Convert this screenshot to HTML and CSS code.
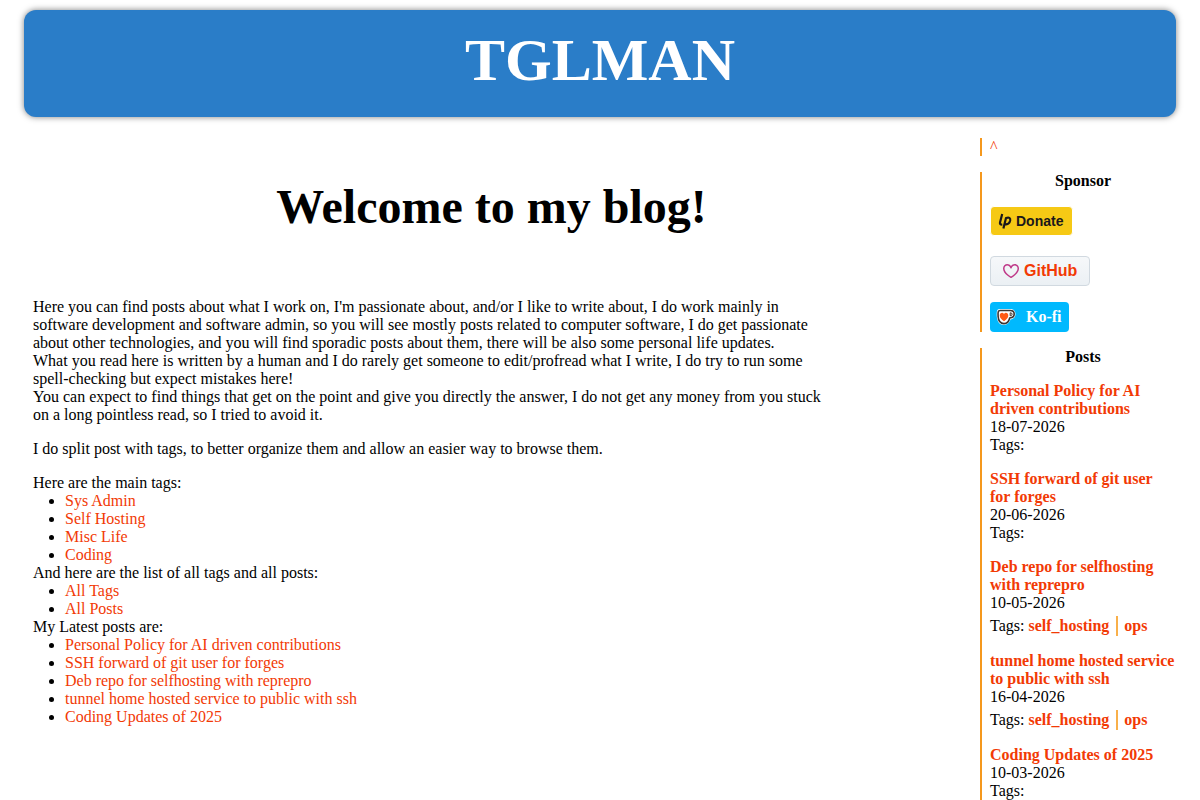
FILE: index.html
```html
<!DOCTYPE html>
<html lang="en">
<head>
    <meta charset="UTF-8">
    <meta name="viewport" content="width=device-width, initial-scale=1.0">
    <title>TGLMAN</title>
    <link rel="stylesheet" href="styles.css">
</head>
<body>
    <header class="site-header" id="top">
        <div class="site-title">TGLMAN</div>
    </header>

    <div class="layout">
        <main class="content">
            <h1>Welcome to my blog!</h1>
            <div class="intro">
                <p>
                    Here you can find posts about what I work on, I'm passionate about, and/or I like to write about, I do work mainly in
                    software development and software admin, so you will see mostly posts related to computer software, I do get passionate
                    about other technologies, and you will find sporadic posts about them, there will be also some personal life updates.<br>
                    What you read here is written by a human and I do rarely get someone to edit/profread what I write, I do try to run some
                    spell-checking but expect mistakes here!<br>
                    You can expect to find things that get on the point and give you directly the answer, I do not get any money from you stuck
                    on a long pointless read, so I tried to avoid it.
                </p>
                <p>I do split post with tags, to better organize them and allow an easier way to browse them.</p>
                <div>Here are the main tags:</div>
                <ul>
                    <li><a href="#">Sys Admin</a></li>
                    <li><a href="#">Self Hosting</a></li>
                    <li><a href="#">Misc Life</a></li>
                    <li><a href="#">Coding</a></li>
                </ul>
                <div>And here are the list of all tags and all posts:</div>
                <ul>
                    <li><a href="#">All Tags</a></li>
                    <li><a href="#">All Posts</a></li>
                </ul>
                <div>My Latest posts are:</div>
                <ul>
                    <li><a href="#">Personal Policy for AI driven contributions</a></li>
                    <li><a href="#">SSH forward of git user for forges</a></li>
                    <li><a href="#">Deb repo for selfhosting with reprepro</a></li>
                    <li><a href="#">tunnel home hosted service to public with ssh</a></li>
                    <li><a href="#">Coding Updates of 2025</a></li>
                </ul>
            </div>
        </main>

        <aside class="sidebar">
            <nav class="block"><a href="#top">^</a></nav>

            <section class="block sponsor">
                <h2>Sponsor</h2>
                <a class="button donate" href="#">
                    <svg width="14" height="16" viewBox="0 0 14 16" fill="none" stroke="#1a171b" stroke-width="2.200" stroke-linejoin="round" aria-hidden="true">
                        <path d="M4.200 1L2 9.500Q1.500 11.800 4.300 11.600"/>
                        <path d="M5.400 15.500L8 5Q12.800 3.600 12.200 7.400Q11.300 12 6.700 11.200"/>
                    </svg>
                    Donate
                </a>
                <a class="button github" href="#">
                    <svg width="16" height="16" viewBox="0 0 16 16" fill="#bf3989" aria-hidden="true">
                        <path d="m8 14.250.345.666a.75.75 0 0 1-.69 0l-.008-.004-.018-.01a7.152 7.152 0 0 1-.31-.17 22.055 22.055 0 0 1-3.434-2.414C2.045 10.731 0 8.350 0 5.500 0 2.836 2.086 1 4.250 1 5.797 1 7.153 1.802 8 3.020 8.847 1.802 10.203 1 11.750 1 13.914 1 16 2.836 16 5.500c0 2.850-2.045 5.231-3.885 6.818a22.066 22.066 0 0 1-3.744 2.584l-.018.01-.006.003h-.002ZM4.250 2.500c-1.336 0-2.750 1.164-2.750 3 0 2.150 1.580 4.144 3.365 5.682A20.580 20.580 0 0 0 8 13.393a20.580 20.580 0 0 0 3.135-2.211C12.920 9.644 14.500 7.650 14.500 5.500c0-1.836-1.414-3-2.750-3-1.373 0-2.609.986-3.029 2.456a.749.749 0 0 1-1.442 0C6.859 3.486 5.623 2.500 4.250 2.500Z"/>
                    </svg>
                    GitHub
                </a>
                <a class="button kofi" href="#">
                    <svg width="20" height="18" viewBox="0 0 20 18" aria-hidden="true">
                        <path d="M3.500 1h11c3 0 5 2.200 5 5 0 3-2 5.200-4.800 5.300C13.300 15 11 17 8 17 3.600 17 1.200 13.500.8 8.500.6 4.500.6 1 3.500 1z" fill="#fff"/>
                        <path d="M4 2.500h10.200c2.600 0 4 1.500 4 3.600 0 2.300-1.500 3.800-4.500 3.900C12.800 13.800 10.800 15.600 8 15.600c-3.600 0-5.600-2.800-5.900-7.200C1.900 4.300 2 2.500 4 2.500z" fill="#fff" stroke="#3b3634" stroke-width="1.600"/>
                        <path d="M14.200 4.800v3q1.900-.1 1.900-1.600t-1.900-1.400z" fill="#fff" stroke="#3b3634" stroke-width="1"/>
                        <path d="M8 13.300C5 11 3.700 9.400 3.700 7.400c0-2.800 3.100-3.500 4.300-1.500 1.200-2 4.300-1.300 4.300 1.500 0 2-1.300 3.600-4.300 5.900z" fill="#ff5a16"/>
                    </svg>
                    Ko-fi
                </a>
            </section>

            <section class="block">
                <h2>Posts</h2>
                <article class="post">
                    <a href="#">Personal Policy for AI driven contributions</a>
                    <time datetime="2026-07-18">18-07-2026</time>
                    <div>Tags:</div>
                </article>
                <article class="post">
                    <a href="#">SSH forward of git user for forges</a>
                    <time datetime="2026-06-20">20-06-2026</time>
                    <div>Tags:</div>
                </article>
                <article class="post">
                    <a href="#">Deb repo for selfhosting with reprepro</a>
                    <time datetime="2026-05-10">10-05-2026</time>
                    <div class="tags">Tags:
                        <ul>
                            <li><a href="#">self_hosting</a></li>
                            <li><a href="#">ops</a></li>
                        </ul>
                    </div>
                </article>
                <article class="post">
                    <a href="#">tunnel home hosted service to public with ssh</a>
                    <time datetime="2026-04-16">16-04-2026</time>
                    <div class="tags">Tags:
                        <ul>
                            <li><a href="#">self_hosting</a></li>
                            <li><a href="#">ops</a></li>
                        </ul>
                    </div>
                </article>
                <article class="post">
                    <a href="#">Coding Updates of 2025</a>
                    <time datetime="2026-03-10">10-03-2026</time>
                    <div>Tags:</div>
                </article>
            </section>
        </aside>
    </div>
</body>
</html>
```

FILE: styles.css
```css
* {
    box-sizing: border-box;
}

body {
    margin: 0;
    padding: 10px 24px 0;
    font-family: "Liberation Serif", "Times New Roman", serif;
    font-size: 16px;
    line-height: 18px;
    color: #000;
    background: #fff;
}

a {
    color: #f23a05;
    text-decoration: none;
}

a:hover {
    text-decoration: underline;
}

.site-header {
    padding: 16px 16px 22px;
    border-radius: 12px;
    background: #2a7dc8;
    box-shadow: 0 0 6px rgba(0, 0, 0, 0.5);
    text-align: center;
}

.site-title {
    font-size: 60px;
    line-height: 69px;
    font-weight: bold;
    color: #fff;
}

.layout {
    display: grid;
    grid-template-columns: 1fr 196px;
    gap: 30px;
    margin-top: 21px;
}

.content {
    padding: 41px 0 0 9px;
}

.content h1 {
    margin: 0 0 64px;
    font-size: 48px;
    line-height: 55px;
    text-align: center;
}

.intro {
    max-width: 800px;
}

.intro p {
    margin: 0 0 16px;
}

.intro ul {
    margin: 0;
    padding-left: 32px;
}

.block {
    margin-bottom: 16px;
    padding-left: 8px;
    border-left: 2px solid #f5981d;
}

.block:last-child {
    margin-bottom: 0;
}

.block h2 {
    margin: 0 0 16px;
    font-size: 16px;
    text-align: center;
}

.sponsor {
    display: flex;
    flex-direction: column;
    align-items: flex-start;
}

.sponsor h2 {
    align-self: stretch;
}

.button {
    display: flex;
    align-items: center;
    height: 30px;
    border-radius: 4px;
    font-weight: bold;
}

.donate {
    gap: 4px;
    margin-bottom: 20px;
    padding: 0 9px 0 7px;
    border: 1px solid #fff;
    background: #f6c915;
    color: #1a171b;
    font-family: "Liberation Sans", Arial, sans-serif;
    font-size: 14px;
}

.github {
    gap: 5px;
    margin-bottom: 16px;
    padding: 0 12px;
    border: 1px solid #d1d9e0;
    background: linear-gradient(#f6f8fa, #ebf0f4);
    font-family: "Liberation Sans", Arial, sans-serif;
}

.kofi {
    gap: 10px;
    padding: 0 7px 0 6px;
    background: #00b9fe;
    color: #fff;
}

.post {
    margin-bottom: 16px;
}

.post:last-child {
    margin-bottom: 0;
}

.post > a,
.post time {
    display: block;
}

.post a {
    font-weight: bold;
}

.tags {
    display: flex;
    align-items: center;
    gap: 4px;
    padding-top: 4px;
}

.tags ul {
    display: flex;
    margin: 0;
    padding: 0;
    list-style: none;
}

.tags li {
    padding: 1px 7px 1px 6px;
    border-right: 2px solid #f9b04a;
}

.tags li:first-child {
    padding-left: 0;
}

.tags li:last-child {
    padding-right: 0;
    border-right: none;
}
```
